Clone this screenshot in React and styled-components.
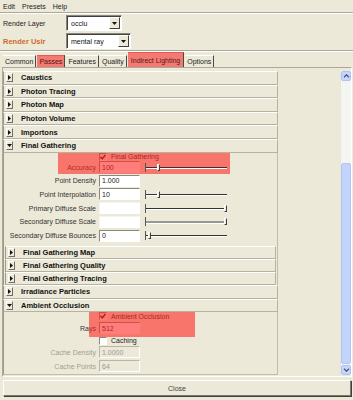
import React from 'react'
import styled, { createGlobalStyle } from 'styled-components'

const font = `"Liberation Sans", Arial, sans-serif`

const GlobalStyle = createGlobalStyle`
  html, body { margin: 0; padding: 0; background: #ece9d8; }
  body { font-family: ${font}; font-size: 7px; color: #222; }
  * { box-sizing: border-box; }
`

const Window = styled.div`
  width: 353px;
  height: 400px;
  display: flex;
  flex-direction: column;
  background: #ece9d8;
  overflow: hidden;
`

const MenuBar = styled.div`
  height: 12px;
  flex: none;
  display: flex;
  align-items: center;
  gap: 7px;
  padding-left: 3px;
  color: #222;
`

const Divider = styled.div`
  height: 2px;
  flex: none;
  border-top: 1px solid #aca899;
  border-bottom: 1px solid #fff;
`

const FormRow = styled.div`
  height: 18px;
  flex: none;
  display: flex;
  align-items: center;
  padding-left: 3px;
`

const FormLabel = styled.span`
  width: 63px;
  font-size: ${p => (p.$bold ? '7.5px' : '7px')};
  font-weight: ${p => (p.$bold ? 700 : 400)};
  color: ${p => (p.$bold ? '#cf6a2a' : '#222')};
`

const Select = styled.div`
  width: ${p => p.$width}px;
  height: 16px;
  background: #fff;
  border: 1px solid;
  border-color: #8a887c #fff #fff #8a887c;
  box-shadow: inset 1px 1px 0 #404040;
  display: flex;
  align-items: center;
  padding: 0 1px 0 4px;
  color: #111;
`

const SelectButton = styled.div`
  margin-left: auto;
  width: 11px;
  height: 12px;
  background: #ece9d8;
  border: 1px solid;
  border-color: #fff #404040 #404040 #fff;
  display: flex;
  align-items: center;
  justify-content: center;
`

const TabBar = styled.div`
  height: 15px;
  flex: none;
  display: flex;
  align-items: flex-end;
  padding-left: 3px;
`

const Tab = styled.div`
  height: ${p => (p.$wide ? 15 : 12)}px;
  padding: 0 ${p => (p.$wide ? 3 : 2)}px;
  display: flex;
  align-items: center;
  border-top: 1px solid ${p => (p.$marked ? '#e25a54' : '#fff')};
  border-right: 1px solid #4a4a44;
  background: ${p => (p.$marked ? '#f27a72' : '#ece9d8')};
  color: ${p => (p.$marked ? '#5a1512' : '#222')};
  margin-right: 1px;
`

const Panel = styled.div`
  flex: 1;
  margin: 0 1px 0 2px;
  border: 1px solid;
  border-color: #aca899 #fff #fff #aca899;
  display: flex;
  padding: 3px 0 1px 0;
  min-height: 0;
`

const Content = styled.div`
  width: 275px;
  flex: none;
  display: flex;
  flex-direction: column;
`

const Header = styled.div`
  height: ${p => (p.$nested ? 13.2 : 13.6)}px;
  flex: none;
  display: flex;
  align-items: center;
  background: #ece9d8;
  border-top: 1px solid #fff;
  border-left: 1px solid #9d9a8a;
  border-right: 1px solid #b5b2a2;
  border-bottom: 1px solid #b5b2a2;
  font-size: 7.5px;
  font-weight: 700;
  color: #111;
`

const Toggle = styled.div`
  width: 7px;
  height: 9px;
  margin: 0 8px 0 2px;
  background: #ece9d8;
  border: 1px solid;
  border-color: #fff #716f64 #716f64 #fff;
  display: flex;
  align-items: center;
  justify-content: center;
`

const Body = styled.div`
  position: relative;
  display: flex;
  flex-direction: column;
  border-left: 1px solid #9d9a8a;
  border-right: 1px solid #c0bdad;
  border-bottom: ${p => (p.$closed ? '1px solid #c0bdad' : 'none')};
  padding-bottom: ${p => p.$bottom || 0}px;
`

const Nested = styled.div`
  display: flex;
  flex-direction: column;
  padding: 3px 1px 0 1px;
`

const Highlight = styled.div`
  position: absolute;
  background: rgba(255, 40, 35, 0.6);
  pointer-events: none;
`

const CheckRow = styled.div`
  height: ${p => p.$h}px;
  display: flex;
  align-items: center;
  gap: 4px;
  padding-left: 95px;
  color: #222;
`

const Box = styled.div`
  width: 8px;
  height: 8px;
  background: ${p => (p.$checked ? 'transparent' : '#fff')};
  border: 1px solid;
  border-color: #8a887c #fff #fff #8a887c;
  display: flex;
  align-items: center;
  justify-content: center;
`

const FieldRow = styled.div`
  height: ${p => p.$h}px;
  display: flex;
  align-items: center;
`

const Label = styled.span`
  width: 92px;
  margin-right: 3px;
  text-align: right;
  white-space: nowrap;
  color: ${p => (p.$disabled ? '#a3a091' : '#333')};
`

const Field = styled.div`
  width: 41px;
  height: 12px;
  flex: none;
  padding-left: 2px;
  display: flex;
  align-items: center;
  background: ${p => (p.$disabled ? '#ece9d8' : '#fff')};
  color: ${p => (p.$disabled ? '#9c9a8e' : '#222')};
  border: 1px solid;
  border-color: ${p =>
    p.$plain ? '#f4f3ee #fff #fff #f4f3ee' : p.$disabled ? '#b9b6a8 #fff #fff #b9b6a8' : '#8a887c #fff #fff #8a887c'};
`

const Slider = styled.div`
  position: relative;
  width: 82px;
  height: 9px;
  margin-left: 5px;
  border-left: 1px solid #555;
  &::before {
    content: '';
    position: absolute;
    left: 0;
    right: 0;
    top: 4px;
    height: ${p => (p.$dim ? 2 : 1)}px;
    background: ${p => (p.$dim ? '#9a988c' : '#333')};
    border-bottom: 1px solid #fff;
  }
`

const Thumb = styled.div`
  position: absolute;
  top: 1px;
  width: 3px;
  height: 7px;
  background: #ece9d8;
  border: 1px solid;
  border-color: #fff #404040 #404040 #fff;
`

const Spacer = styled.div`
  flex: 1;
`

const Scrollbar = styled.div`
  width: 11px;
  flex: none;
  display: flex;
  flex-direction: column;
  background: #f6f6f1;
  border-left: 1px solid #e6e5dc;
`

const ScrollButton = styled.div`
  height: 10px;
  flex: none;
  background: #c6d5fb;
  border: 1px solid #b0c3f0;
  border-radius: 2px;
  display: flex;
  align-items: center;
  justify-content: center;
`

const Track = styled.div`
  flex: 1;
  display: flex;
  flex-direction: column;
  padding: ${p => p.$offset}px 0 1px 0;
`

const ScrollThumb = styled.div`
  flex: 1;
  background: #c3d4fc;
  border: 1px solid #b2c5f4;
  border-radius: 2px;
`

const CloseBar = styled.div`
  height: 23px;
  flex: none;
  padding: 3px 2px 4px 3px;
`

const CloseButton = styled.div`
  height: 16px;
  display: flex;
  align-items: center;
  justify-content: center;
  background: #ece9d8;
  border: 1px solid;
  border-color: #fff #7a786c #7a786c #fff;
  box-shadow: 1px 1px 0 #404040;
  color: #444;
`

const Arrow = ({ open }) =>
  open ? (
    <svg width="5" height="3" viewBox="0 0 5 3"><path d="M0 0H5L2.5 3Z" fill="#111" /></svg>
  ) : (
    <svg width="3" height="5" viewBox="0 0 3 5"><path d="M0 0L3 2.5L0 5Z" fill="#111" /></svg>
  )

const Chevron = ({ down }) => (
  <svg width="7" height="4" viewBox="0 0 7 4">
    <path d={down ? 'M1 0.8L3.5 3.2L6 0.8' : 'M1 3.2L3.5 0.8L6 3.2'} stroke="#3f5480" strokeWidth="1.2" fill="none" />
  </svg>
)

const Check = () => (
  <svg width="6" height="6" viewBox="0 0 6 6">
    <path d="M0.5 3L2.3 4.8L5.5 0.8" stroke="#1a0a0a" strokeWidth="1.3" fill="none" />
  </svg>
)

const SectionHeader = ({ title, open, nested }) => (
  <Header $nested={nested}>
    <Toggle><Arrow open={open} /></Toggle>
    {title}
  </Header>
)

const Row = ({ h, label, value, slider, plain, disabled, dim }) => (
  <FieldRow $h={h}>
    <Label $disabled={disabled}>{label}</Label>
    <Field $plain={plain} $disabled={disabled}>{value}</Field>
    {slider !== undefined && (
      <Slider $dim={dim}>
        <Thumb style={{ left: slider }} />
      </Slider>
    )}
  </FieldRow>
)

const tabs = [
  { label: 'Common' },
  { label: 'Passes', marked: true },
  { label: 'Features' },
  { label: 'Quality' },
  { label: 'Indirect Lighting', marked: true, wide: true },
  { label: 'Options' },
]

const topSections = ['Caustics', 'Photon Tracing', 'Photon Map', 'Photon Volume', 'Importons']

const gatherRows = [
  { h: 14, label: 'Point Density', value: '1.000' },
  { h: 13.5, label: 'Point Interpolation', value: '10', slider: 11 },
  { h: 14, label: 'Primary Diffuse Scale', value: '', slider: 78, plain: true },
  { h: 13.5, label: 'Secondary Diffuse Scale', value: '', slider: 78, plain: true, dim: true },
  { h: 14, label: 'Secondary Diffuse Bounces', value: '0', slider: 2 },
]

const App = () => (
  <>
    <GlobalStyle />
    <Window>
      <MenuBar>
        <span>Edit</span>
        <span>Presets</span>
        <span>Help</span>
      </MenuBar>
      <Divider />
      <FormRow>
        <FormLabel>Render Layer</FormLabel>
        <Select $width={56}>
          occlu
          <SelectButton><Arrow open /></SelectButton>
        </Select>
      </FormRow>
      <FormRow>
        <FormLabel $bold>Render Usir</FormLabel>
        <Select $width={65}>
          mental ray
          <SelectButton><Arrow open /></SelectButton>
        </Select>
      </FormRow>
      <Divider />
      <TabBar>
        {tabs.map(t => (
          <Tab key={t.label} $marked={t.marked} $wide={t.wide}>{t.label}</Tab>
        ))}
      </TabBar>
      <Panel>
        <Content>
          {topSections.map(s => (
            <SectionHeader key={s} title={s} />
          ))}
          <SectionHeader title="Final Gathering" open />
          <Body>
            <Highlight style={{ left: 54, top: 0, width: 172, height: 21 }} />
            <CheckRow $h={8}>
              <Box $checked><Check /></Box>
              <span>Final Gathering</span>
            </CheckRow>
            <Row h={13} label="Accuracy" value="100" slider={11} />
            {gatherRows.map(r => (
              <Row key={r.label} {...r} />
            ))}
            <Nested>
              <SectionHeader nested title="Final Gathering Map" />
              <SectionHeader nested title="Final Gathering Quality" />
              <SectionHeader nested title="Final Gathering Tracing" />
            </Nested>
          </Body>
          <SectionHeader title="Irradiance Particles" />
          <SectionHeader title="Ambient Occlusion" open />
          <Body $closed $bottom={1}>
            <Highlight style={{ left: 85, top: 0, width: 106, height: 25 }} />
            <CheckRow $h={8}>
              <Box $checked><Check /></Box>
              <span>Ambient Occlusion</span>
            </CheckRow>
            <Row h={16} label="Rays" value="512" />
            <CheckRow $h={9}>
              <Box />
              <span>Caching</span>
            </CheckRow>
            <Row h={14} label="Cache Density" value="1.0000" disabled />
            <Row h={14} label="Cache Points" value="64" disabled />
          </Body>
        </Content>
        <Spacer />
        <Scrollbar>
          <ScrollButton><Chevron /></ScrollButton>
          <Track $offset={82}>
            <ScrollThumb />
          </Track>
          <ScrollButton><Chevron down /></ScrollButton>
        </Scrollbar>
      </Panel>
      <CloseBar>
        <CloseButton>Close</CloseButton>
      </CloseBar>
    </Window>
  </>
)

export default App
